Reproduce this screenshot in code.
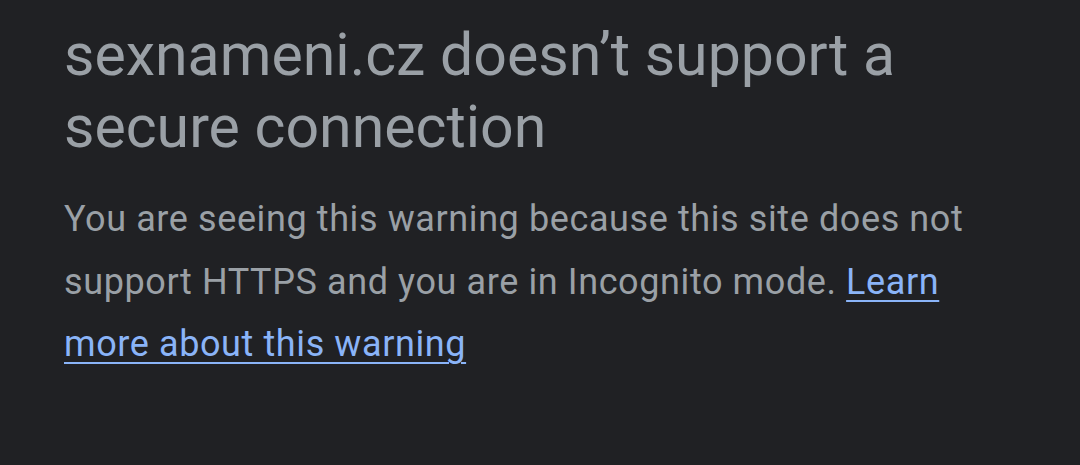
export default function App() {
  return (
    <div className="w-[1080px] h-[465px] overflow-hidden bg-[#202124] font-['Roboto',sans-serif]">
      <div className="pl-[64px] pr-[100px] pt-[19px]">
        <h1 className="text-[59px] leading-[72px] text-[#9aa0a6] font-normal">
          sexnameni.cz doesn’t support a secure connection
        </h1>
        <p className="mt-[25px] text-[36px] leading-[62.5px] tracking-[0.6px] text-[#9aa0a6]">
          You are seeing this warning because this site does not support HTTPS and you are in Incognito mode.{" "}
          <a href="#" className="text-[#8ab4f8] underline underline-offset-[6px] decoration-2">
            Learn more about this warning
          </a>
        </p>
      </div>
    </div>
  );
}
